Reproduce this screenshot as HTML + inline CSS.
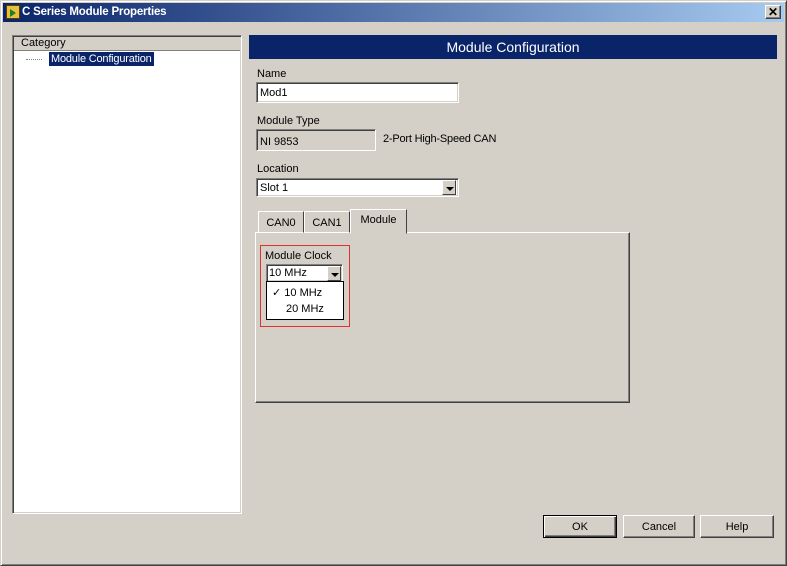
<!DOCTYPE html>
<html><head><style>
*{margin:0;padding:0;box-sizing:border-box}
body{width:787px;height:566px;background:#d4d0c8;font-family:"Liberation Sans",Tahoma,sans-serif;font-size:11px;color:#000;position:relative;overflow:hidden}
.a{position:absolute}
.sunk{border-top:1px solid #808080;border-left:1px solid #808080;border-bottom:1px solid #fff;border-right:1px solid #fff;box-shadow:inset 1px 1px 0 #404040,inset -1px -1px 0 #d4d0c8}
.btn{position:absolute;background:#d4d0c8;border:1px solid;border-color:#fff #404040 #404040 #fff;box-shadow:inset -1px -1px 0 #808080;text-align:center;line-height:22px;font-size:11px}
.arrow{position:absolute;width:14px;background:#d4d0c8;border:1px solid;border-color:#fff #404040 #404040 #fff}
.arrow:after{content:"";position:absolute;left:3px;top:6px;border-left:4px solid transparent;border-right:4px solid transparent;border-top:4px solid #000}
</style></head><body>
<div class="a" style="left:0;top:0;width:787px;height:566px;border:1px solid;border-color:#d4d0c8 #404040 #404040 #d4d0c8;box-shadow:inset 1px 1px 0 #fff,inset -1px -1px 0 #808080"></div>
<div class="a" style="left:3px;top:3px;width:781px;height:19px;background:linear-gradient(90deg,#0a246a,#a6caf0)"></div>
<div class="a" style="left:6px;top:5px;width:14px;height:14px;background:#e8c040;border:1px solid #604000"><div style="margin:3px 0 0 3px;width:0;height:0;border-top:4px solid transparent;border-bottom:4px solid transparent;border-left:6px solid #208020"></div></div>
<div class="a" style="left:22px;top:6px;color:#fff;font-weight:bold;font-size:11.5px;letter-spacing:-0.2px">C Series Module Properties</div>
<div class="btn" style="left:765px;top:5px;width:16px;height:14px;line-height:12px;font-weight:bold;font-size:12px">✕</div>

<div class="a sunk" style="left:12px;top:35px;width:230px;height:479px;background:#fff"></div>
<div class="a" style="left:14px;top:37px;width:226px;height:14px;background:#d4d0c8;border-bottom:1px solid #808080;padding-left:7px;line-height:13px">Category</div>
<div class="a" style="left:26px;top:59px;width:16px;border-top:1px dotted #808080"></div>
<div class="a" style="left:49px;top:52px;background:#0a246a;color:#fff;padding:0 2px;line-height:14px;letter-spacing:-0.2px">Module Configuration</div>

<div class="a" style="left:249px;top:35px;width:528px;height:24px;background:#0a246a;color:#fff;font-size:14px;text-align:center;line-height:24px">Module Configuration</div>

<div class="a" style="left:257px;top:68px">Name</div>
<div class="a sunk" style="left:256px;top:82px;width:203px;height:21px;background:#fff;padding:4px 0 0 3px">Mod1</div>
<div class="a" style="left:257px;top:115px">Module Type</div>
<div class="a sunk" style="left:256px;top:129px;width:120px;height:22px;padding:6px 0 0 3px">NI 9853</div>
<div class="a" style="left:383px;top:133px;letter-spacing:-0.2px">2-Port High-Speed CAN</div>
<div class="a" style="left:257px;top:163px">Location</div>
<div class="a sunk" style="left:256px;top:178px;width:203px;height:19px;background:#fff;padding:3px 0 0 3px">Slot 1</div>
<div class="arrow" style="left:442px;top:180px;height:15px"></div>

<div class="a" style="left:255px;top:232px;width:375px;height:171px;border:1px solid;border-color:#fff #404040 #404040 #fff;box-shadow:inset -1px -1px 0 #808080"></div>
<div class="a" style="left:258px;top:211px;width:46px;height:22px;border:1px solid;border-color:#fff #404040 transparent #fff;text-align:center;line-height:22px">CAN0</div>
<div class="a" style="left:304px;top:211px;width:46px;height:22px;border:1px solid;border-color:#fff #404040 transparent #fff;text-align:center;line-height:22px">CAN1</div>
<div class="a" style="left:350px;top:209px;width:57px;height:25px;background:#d4d0c8;border:1px solid;border-color:#fff #404040 transparent #fff;text-align:center;line-height:20px">Module</div>

<div class="a" style="left:260px;top:245px;width:90px;height:82px;border:1px solid #e03030"></div>
<div class="a" style="left:265px;top:250px">Module Clock</div>
<div class="a sunk" style="left:266px;top:264px;width:77px;height:18px;background:#fff;padding:2px 0 0 2px">10 MHz</div>
<div class="arrow" style="left:327px;top:266px;height:15px"></div>
<div class="a" style="left:266px;top:281px;width:78px;height:39px;background:#fff;border:1px solid #000"></div>
<div class="a" style="left:272px;top:286px">✓ 10 MHz</div>
<div class="a" style="left:286px;top:303px">20 MHz</div>

<div class="btn" style="left:543px;top:515px;width:74px;height:23px;border:1px solid #000;box-shadow:inset 1px 1px 0 #fff,inset -1px -1px 0 #404040,inset -2px -2px 0 #808080">OK</div>
<div class="btn" style="left:623px;top:515px;width:72px;height:23px">Cancel</div>
<div class="btn" style="left:700px;top:515px;width:74px;height:23px">Help</div>
</body></html>
